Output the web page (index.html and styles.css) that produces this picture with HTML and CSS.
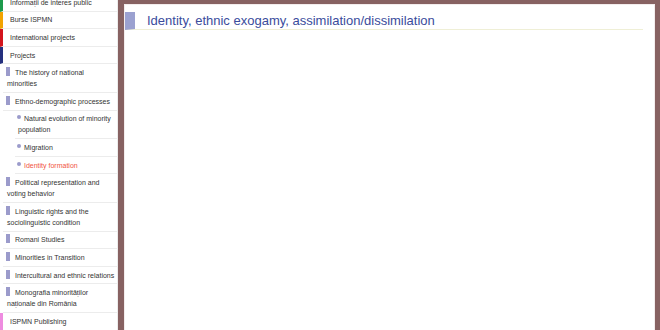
FILE: index.html
```html
<!DOCTYPE html>
<html lang="ro">
<head>
  <meta charset="UTF-8" />
  <title>Identity formation - ISPMN</title>
  <link rel="stylesheet" href="styles.css">
</head>
<body>
  <div class="page">
    <div class="sidebar">
      <ul class="menu">
        <li class="top green">Informații de interes public</li>
        <li class="top orange">Burse ISPMN</li>
        <li class="top red">International projects</li>
        <li class="top navy">Projects</li>
        <li class="sub">The history of national minorities</li>
        <li class="sub">Ethno-demographic processes</li>
        <li class="subsub">Natural evolution of minority population</li>
        <li class="subsub">Migration</li>
        <li class="subsub active">Identity formation</li>
        <li class="sub">Political representation and voting behavior</li>
        <li class="sub">Linguistic rights and the sociolinguistic condition</li>
        <li class="sub">Romani Studies</li>
        <li class="sub">Minorities in Transition</li>
        <li class="sub">Intercultural and ethnic relations</li>
        <li class="sub">Monografia minorităților naționale din România</li>
        <li class="top pink">ISPMN Publishing</li>
      </ul>
    </div>

    <div class="content">
      <h1 class="page-title">Identity, ethnic exogamy, assimilation/dissimilation</h1>
    </div>
  </div>
</body>
</html>
```

FILE: styles.css
```css
html, body {
  height: 100%;
}
body {
  margin: 0;
  background-color: #876262;
  font-family: "Liberation Sans", Arial, sans-serif;
  color: #333;
  overflow: hidden;
}
.page {
  display: flex;
  height: 100%;
}
.sidebar {
  width: 117px;
  flex-shrink: 0;
  background-color: #fff;
  border-right: 1px solid #ececec;
  overflow: hidden;
}
.menu {
  list-style: none;
  margin: -6px 0 0 0;
  padding: 0;
  font-size: 7px;
  line-height: 11px;
}
.menu li {
  padding: 2.8px 1px 2.8px 7px;
  border-bottom: 1px solid #ececec;
}
/* top level entries with a coloured bar */
.menu .top {
  border-left: 3px solid #999;
}
.menu .green { border-left-color: #1c9a4c; }
.menu .orange { border-left-color: #f2a300; }
.menu .red { border-left-color: #d3141c; }
.menu .navy { border-left-color: #25307e; }
.menu .pink { border-left-color: #ee8ce0; }

.menu .sub {
  margin-left: 3px;
  padding-left: 4px;
  padding-right: 2.5px;
}
.menu .sub::before {
  content: "";
  display: inline-block;
  width: 4px;
  height: 9px;
  margin: 0 5px 0 -1px;
  background-color: #9b9bcb;
  vertical-align: -1px;
}
.menu .subsub {
  margin-left: 15px;
  padding-left: 3px;
}
.menu .subsub::before {
  content: "";
  display: inline-block;
  width: 4px;
  height: 4px;
  border-radius: 50%;
  margin: 0 3px 0 -1px;
  background-color: #9b9bcb;
  vertical-align: 2px;
}
.menu .active {
  color: #f1543f;
}
.content {
  flex: 1;
  margin: 4px 5px 0 6px;
  background-color: #fff;
  border: 1px solid #f3eded;
  border-bottom: none;
}
.page-title {
  margin: 7px 11px 0 0;
  padding-left: 12px;
  border-left: 10px solid #9ba1d0;
  border-bottom: 1px solid #efefd6;
  font-size: 13px;
  font-weight: normal;
  line-height: 17px;
  color: #3a4c9c;
}
```
